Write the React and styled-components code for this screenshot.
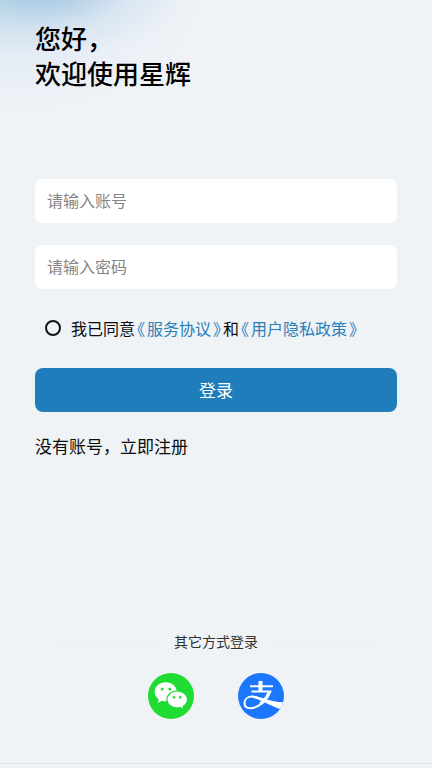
import React, { useState } from "react";
import styled, { createGlobalStyle } from "styled-components";

const GlobalStyle = createGlobalStyle`
  * {
    box-sizing: border-box;
  }
  body {
    margin: 0;
    background: #eff3f6;
    color: #0c0d0e;
    font-family: "Noto Sans CJK SC", sans-serif;
  }
  button, input {
    font-family: inherit;
  }
`

const Page = styled("div")`
  min-height: 100vh;
  display: flex;
  flex-direction: column;
  background:
    radial-gradient(ellipse 150px 72px at 42px -16px, #9cc3e0 0%, rgba(168, 202, 227, 0.8) 28%, rgba(195, 217, 235, 0.4) 60%, rgba(225, 234, 244, 0) 100%),
    radial-gradient(ellipse 210px 120px at 0 0, #cfe1ee 0%, #dee9f2 30%, #e8eef6 60%, rgba(236, 240, 247, 0.7) 80%, rgba(239, 243, 246, 0) 100%),
    #eff3f6;
`

const Main = styled("main")`
  flex: 1;
  display: flex;
  flex-direction: column;
  padding: 20px 35px 44px;
`

const Title = styled("h1")`
  margin: 0;
  color: #000;
  font-size: 26px;
  font-weight: 500;
  line-height: 35px;
`

const Form = styled("form")`
  display: flex;
  flex-direction: column;
  margin-top: 89px;
`

const Field = styled("input")`
  width: 100%;
  height: 44px;
  margin-bottom: 22px;
  padding: 0 12px 2px;
  border: 0;
  border-radius: 8px;
  background: #fff;
  font-size: 16px;
  outline: none;

  &::placeholder {
    color: #858585;
    opacity: 1;
  }
`

const Agreement = styled("div")`
  display: flex;
  align-items: center;
  gap: 10px;
  height: 34px;
  padding-left: 10px;
  font-size: 16px;
  line-height: 24px;
  white-space: nowrap;
`

const Check = styled("input")`
  appearance: none;
  flex: none;
  width: 16px;
  height: 16px;
  margin: 0;
  border: 2px solid #111;
  border-radius: 50%;

  &:checked {
    background: #207dbc;
  }
`

const Link = styled("a")`
  color: ${(props) => (props.$plain ? "inherit" : "#2b80b9")};
  text-decoration: none;
`

/* book title marks take half a character plus a little air */
const Mark = styled("span")`
  margin: 0 2px;
  font-feature-settings: "halt";
`

const Submit = styled("button")`
  height: 44px;
  margin-top: 23px;
  padding: 0 0 2px;
  border: 0;
  border-radius: 8px;
  background: #207dbc;
  color: #fff;
  font-size: 17px;
  cursor: pointer;
`

const Register = styled("p")`
  margin: 22px 0 0;
  font-size: 17px;
  line-height: 24px;
`

const Other = styled("section")`
  margin-top: auto;
`

const Divider = styled("div")`
  display: flex;
  align-items: center;
  gap: 13px;
  padding: 0 20px;
  color: #333;
  font-size: 14px;
  line-height: 20px;

  &::before, &::after {
    content: "";
    flex: 1;
    height: 1px;
    background: #ebeef1;
  }
`

const Socials = styled("div")`
  display: flex;
  justify-content: center;
  gap: 44px;
  margin-top: 22px;
`

const Social = styled("button")`
  width: 46px;
  height: 46px;
  padding: 0;
  border: 0;
  border-radius: 50%;
  overflow: hidden;
  background: ${(props) => props.$color};
  cursor: pointer;

  svg {
    display: block;
  }
`

const BottomBar = styled("footer")`
  height: 5px;
  border-top: 1px solid #e1e5e8;
  background: #eff3f7;
`

const WechatIcon = () => (
  <svg width="46" height="46" viewBox="0 0 46 46" aria-hidden="true">
    <path fill="#fff" d="M17.7 9.3c-6.200 0-11.100 4.200-11.100 9.500 0 3 1.600 5.600 4.200 7.400l-1.100 3.800 4.100-2.300c1.200.4 2.500.6 3.900.6 6.100 0 11.100-4.200 11.100-9.500s-5-9.500-11.100-9.500z" />
    <path fill="#fff" stroke="#1fdc32" strokeWidth="1.200" d="M29.200 17.900c-5.700 0-10.300 3.900-10.300 8.600s4.600 8.600 10.300 8.600c1.200 0 2.300-.2 3.400-.5l3.500 2-.9-3.300c2.600-1.500 4.300-4 4.300-6.800 0-4.700-4.600-8.600-10.300-8.600z" />
    <g fill="#1fdc32">
      <circle cx="14.200" cy="16" r="1.500" />
      <circle cx="21.800" cy="16" r="1.500" />
      <circle cx="26.100" cy="24.200" r="1.300" />
      <circle cx="32.300" cy="24.200" r="1.300" />
    </g>
  </svg>
)

const AlipayIcon = () => (
  <svg width="46" height="46" viewBox="0 0 46 46" aria-hidden="true">
    <g fill="#fff">
      <path d="M20.500 8h4v10h-4z" />
      <path d="M12 12.300h23v2H12z" />
      <path d="M13.500 17.600h20v2h-20z" />
      <path d="M13.500 22.500C22 22.700 29 28.500 46 29.300L44 36.300C33.500 34 24 26.500 13.500 24.600z" />
    </g>
    <g fill="none" stroke="#fff">
      <path strokeWidth="3.400" d="M31.600 18.500C30 23 27 27.500 22.300 31" />
      <path strokeWidth="2" d="M23.500 30.600C19.500 34.300 15.500 35.200 12.500 35.200c-4 0-6-2.200-6-5.200 0-4 3.500-6.400 8-6.400" />
    </g>
  </svg>
)

const App = () => {
  const [agreed, setAgreed] = useState(false)

  return (
    <Page>
      <GlobalStyle />
      <Main>
        <Title>您好，<br />欢迎使用星辉</Title>
        <Form onSubmit={(e) => e.preventDefault()}>
          <Field type="text" placeholder="请输入账号" aria-label="请输入账号" />
          <Field type="password" placeholder="请输入密码" aria-label="请输入密码" />
          <Agreement>
            <Check id="agree" type="checkbox" checked={agreed} onChange={(e) => setAgreed(e.target.checked)} />
            <div>
              <label htmlFor="agree">我已同意</label>
              <Link href="#service"><Mark>《</Mark>服务协议<Mark>》</Mark></Link>
              和
              <Link href="#privacy"><Mark>《</Mark>用户隐私政策<Mark>》</Mark></Link>
            </div>
          </Agreement>
          <Submit type="submit">登录</Submit>
        </Form>
        <Register>没有账号，<Link $plain href="#register">立即注册</Link></Register>
        <Other>
          <Divider>其它方式登录</Divider>
          <Socials>
            <Social $color="#1fdc32" type="button" aria-label="微信"><WechatIcon /></Social>
            <Social $color="#1a77fe" type="button" aria-label="支付宝"><AlipayIcon /></Social>
          </Socials>
        </Other>
      </Main>
      <BottomBar />
    </Page>
  )
}

export default App
